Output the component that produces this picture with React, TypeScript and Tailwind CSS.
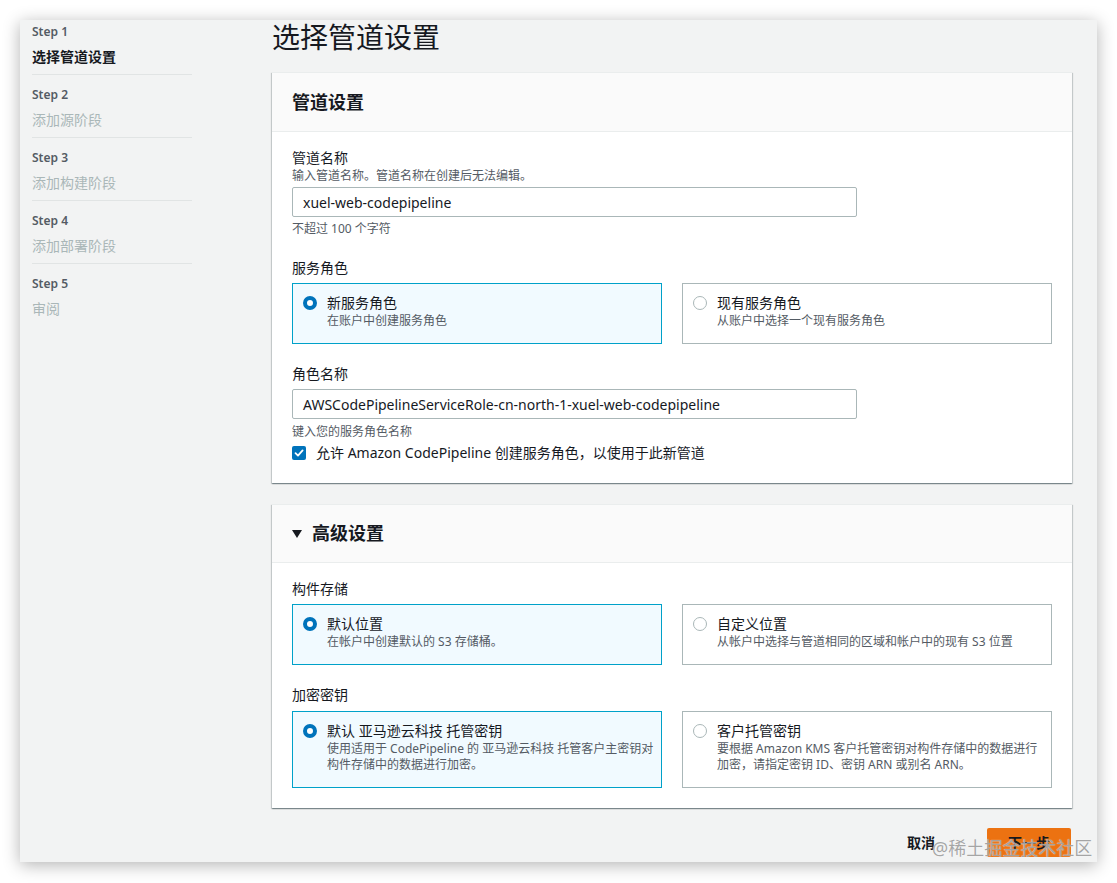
import React from "react";

const FONT = "font-['Noto_Sans','Noto_Sans_CJK_SC',sans-serif]";

function Radio({ checked }: { checked: boolean }) {
  return checked ? (
    <span className="mt-[3px] w-[14px] h-[14px] rounded-full border-[4px] border-[#0073bb] bg-white shrink-0" />
  ) : (
    <span className="mt-[3px] w-[14px] h-[14px] rounded-full border border-[#aab7b8] bg-white shrink-0" />
  );
}

function Tile({
  checked,
  title,
  desc,
}: {
  checked: boolean;
  title: string;
  desc: React.ReactNode;
}) {
  return (
    <div
      className={
        checked
          ? "border border-[#00a1c9] bg-[#f1faff] pl-[10px] pr-[4px] pt-[9px] pb-[14px] flex gap-[10px]"
          : "border border-[#aab7b8] bg-white pl-[10px] pr-[4px] pt-[9px] pb-[14px] flex gap-[10px]"
      }
    >
      <Radio checked={checked} />
      <div className="flex flex-col">
        <div className="text-[14px] leading-[20px] text-[#16191f]">{title}</div>
        <div className="text-[12px] leading-[16px] text-[#545b64]">{desc}</div>
      </div>
    </div>
  );
}

function Step({
  n,
  name,
  active,
  last,
}: {
  n: number;
  name: string;
  active?: boolean;
  last?: boolean;
}) {
  return (
    <div className={last ? "pt-[0px]" : "pb-[7px] border-b border-[#e1e4e4] mb-[12px]"}>
      <div className="text-[12px] leading-[16px] font-semibold text-[#545b64]">Step {n}</div>
      <div
        className={
          active
            ? "mt-[7px] text-[14px] leading-[20px] font-bold text-[#16191f]"
            : "mt-[7px] text-[14px] leading-[20px] text-[#aab7b8]"
        }
      >
        {name}
      </div>
    </div>
  );
}

const cardShadow =
  "shadow-[0_1px_1px_0_rgba(0,28,36,0.3),1px_1px_1px_0_rgba(0,28,36,0.15),-1px_1px_1px_0_rgba(0,28,36,0.15)]";

export default function App() {
  return (
    <div className={`w-[1117px] h-[883px] bg-white pt-[20px] pl-[20px] ${FONT}`}>
      <div className="relative w-[1077px] h-[842px] bg-[#f2f3f3] shadow-[0_3px_16px_rgba(0,0,0,0.3)] overflow-hidden flex">
        <nav className="w-[160px] ml-[12px] pt-[4px] shrink-0">
          <Step n={1} name="选择管道设置" active />
          <Step n={2} name="添加源阶段" />
          <Step n={3} name="添加构建阶段" />
          <Step n={4} name="添加部署阶段" />
          <Step n={5} name="审阅" last />
        </nav>

        <main className="ml-[80px] w-[800px] shrink-0">
          <h1 className="h-[34px] text-[28px] leading-[34px] text-[#16191f] mb-[18px]">选择管道设置</h1>

          <section className={`bg-white border-t border-[#eaeded] ${cardShadow}`}>
            <div className="h-[59px] bg-[#fafafa] border-b border-[#eaeded] px-[20px] flex items-center">
              <h2 className="text-[18px] font-bold text-[#16191f]">管道设置</h2>
            </div>
            <div className="px-[20px] pt-[16px] pb-[20px]">
              <div className="text-[14px] leading-[20px] text-[#16191f]">管道名称</div>
              <div className="text-[12px] leading-[16px] text-[#545b64]">输入管道名称。管道名称在创建后无法编辑。</div>
              <div className="mt-[3px] w-[565px] h-[30px] border border-[#aab7b8] rounded-[2px] bg-white px-[10px] flex items-center text-[14px] text-[#16191f]">
                xuel-web-codepipeline
              </div>
              <div className="mt-[4px] text-[12px] leading-[16px] text-[#545b64]">不超过 100 个字符</div>

              <div className="mt-[21px] text-[14px] leading-[20px] text-[#16191f]">服务角色</div>
              <div className="mt-[5px] grid grid-cols-2 gap-[20px]">
                <Tile checked title="新服务角色" desc="在账户中创建服务角色" />
                <Tile checked={false} title="现有服务角色" desc="从账户中选择一个现有服务角色" />
              </div>

              <div className="mt-[20px] text-[14px] leading-[20px] text-[#16191f]">角色名称</div>
              <div className="mt-[5px] w-[565px] h-[30px] border border-[#aab7b8] rounded-[2px] bg-white px-[10px] flex items-center text-[14px] text-[#16191f]">
                AWSCodePipelineServiceRole-cn-north-1-xuel-web-codepipeline
              </div>
              <div className="mt-[5px] text-[12px] leading-[16px] text-[#545b64]">键入您的服务角色名称</div>
              <div className="mt-[3px] flex items-center gap-[10px]">
                <span className="w-[14px] h-[14px] rounded-[2px] bg-[#0073bb] flex items-center justify-center shrink-0">
                  <svg width="10" height="10" viewBox="0 0 10 10">
                    <path d="M1.5 5.2 L4 7.6 L8.6 2.4" fill="none" stroke="white" strokeWidth="1.8" strokeLinecap="round" strokeLinejoin="round" />
                  </svg>
                </span>
                <span className="text-[14px] leading-[20px] text-[#16191f]">
                  允许 Amazon CodePipeline 创建服务角色，以使用于此新管道
                </span>
              </div>
            </div>
          </section>

          <section className={`mt-[21px] bg-white border-t border-[#eaeded] ${cardShadow}`}>
            <div className="h-[58px] bg-[#fafafa] border-b border-[#eaeded] px-[20px] flex items-center gap-[10px]">
              <svg width="10" height="8" viewBox="0 0 10 8">
                <path d="M0 0 H10 L5 8 Z" fill="#16191f" />
              </svg>
              <h2 className="text-[18px] font-bold text-[#16191f]">高级设置</h2>
            </div>
            <div className="px-[20px] pt-[16px] pb-[20px]">
              <div className="text-[14px] leading-[20px] text-[#16191f]">构件存储</div>
              <div className="mt-[5px] grid grid-cols-2 gap-[20px]">
                <Tile checked title="默认位置" desc="在帐户中创建默认的 S3 存储桶。" />
                <Tile checked={false} title="自定义位置" desc="从帐户中选择与管道相同的区域和帐户中的现有 S3 位置" />
              </div>
              <div className="mt-[20px] text-[14px] leading-[20px] text-[#16191f]">加密密钥</div>
              <div className="mt-[6px] grid grid-cols-2 gap-[20px]">
                <Tile
                  checked
                  title="默认 亚马逊云科技 托管密钥"
                  desc="使用适用于 CodePipeline 的 亚马逊云科技 托管客户主密钥对构件存储中的数据进行加密。"
                />
                <Tile
                  checked={false}
                  title="客户托管密钥"
                  desc="要根据 Amazon KMS 客户托管密钥对构件存储中的数据进行加密，请指定密钥 ID、密钥 ARN 或别名 ARN。"
                />
              </div>
            </div>
          </section>

          <div className="mt-[20px] flex items-center justify-end gap-[52px] pr-[1px]">
            <span className="text-[14px] font-bold text-[#16191f]">取消</span>
            <span className="w-[84px] h-[29px] rounded-[2px] bg-[#ec7211] flex items-center justify-center text-[14px] font-bold text-[#16191f]">
              下一步
            </span>
          </div>
        </main>

        <div className="absolute left-[912px] top-[816px] text-[18px] leading-[24px] text-[rgba(150,150,150,0.85)] [text-shadow:0_0_1px_rgba(255,255,255,0.9)] pointer-events-none">
          @稀土掘金技术社区
        </div>
      </div>
    </div>
  );
}
